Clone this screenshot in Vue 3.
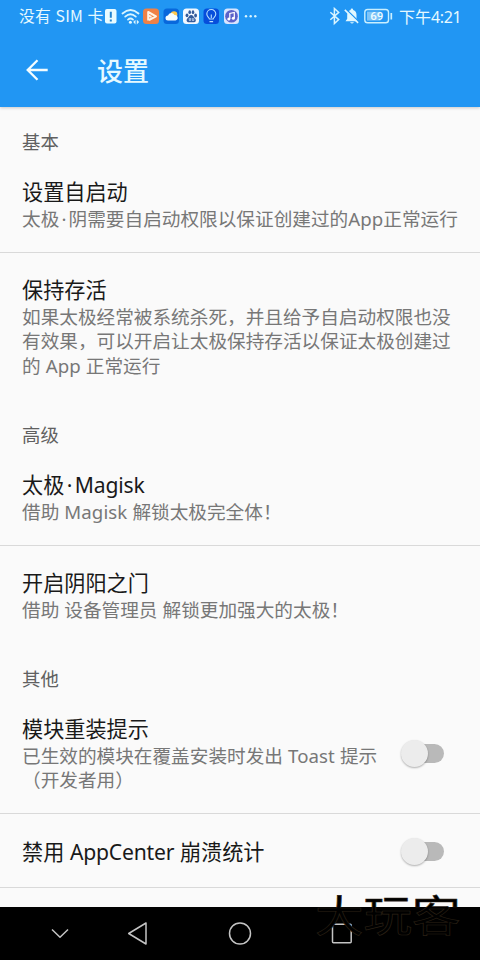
<script setup>
const sections = [
  {
    label: '基本',
    rows: [
      { title: '设置自启动', lines: ['太极·阴需要自启动权限以保证创建过的App正常运行'] },
      {
        title: '保持存活',
        lines: ['如果太极经常被系统杀死，并且给予自启动权限也没', '有效果，可以开启让太极保持存活以保证太极创建过', '的 App 正常运行'],
        last: true,
      },
    ],
  },
  {
    label: '高级',
    rows: [
      { title: '太极·Magisk', lines: ['借助 Magisk 解锁太极完全体！'] },
      { title: '开启阴阳之门', lines: ['借助 设备管理员 解锁更加强大的太极！'], last: true },
    ],
  },
  {
    label: '其他',
    rows: [
      { title: '模块重装提示', lines: ['已生效的模块在覆盖安装时发出 Toast 提示', '（开发者用）'], toggle: true },
      { title: '禁用 AppCenter 崩溃统计', lines: [], toggle: true },
    ],
  },
]

const runs = (text) =>
  text
    .split(/([A-Za-z]+|·)/)
    .filter(Boolean)
    .map((t) => ({ t, kind: t === '·' ? 'dot' : /^[A-Za-z]/.test(t) ? 'latin' : 'han' }))
</script>

<template>
  <div class="screen">
    <header class="appbar">
      <div class="status">
        <span class="carrier">没有 SIM 卡</span>
        <svg class="tray" width="154" height="20" viewBox="0 0 154 20">
          <rect x="1" y="2" width="11.5" height="14.6" rx="2" fill="#e9fbff" />
          <path d="M6.8 4.7v6M6.8 12.6v2" stroke="#2384cf" stroke-width="2" />
          <g fill="none" stroke="#d9f5ff" stroke-width="1.8" stroke-linecap="round">
            <path d="M18.5 6.5Q26.5-.4 34.500 6.500" />
            <path d="M21.200 9.600Q26.500 5 31.800 9.600" />
            <path d="M24 12.600Q26.500 10.500 29 12.600" />
          </g>
          <circle cx="26.400" cy="15.300" r="1.500" fill="#e9fbff" />
          <path d="M31.500 12.800l-2.300 2.300 2.300 2.300zM32.800 12.800l2.300 2.300-2.300 2.300z" fill="#d9f5ff" />
          <rect x="39" y="1.500" width="16" height="15.500" rx="3.500" fill="#ef8146" />
          <path d="M44.200 13.500V5l7.800 4.300-7 3.700M44.500 8.700l3 1.200" fill="none" stroke="#fff3e5" stroke-width="2" stroke-linejoin="round" />
          <rect x="59.500" y="1.500" width="15.500" height="15.500" rx="3.500" fill="#0868dc" />
          <circle cx="70" cy="7.500" r="3.300" fill="#ffc84c" />
          <path d="M64 13.500a2.500 2.500 0 010-5 3.500 3.500 0 016.500-.5 2.800 2.800 0 011 5.500z" fill="#f4fcff" />
          <rect x="79" y="1.500" width="16" height="15.500" rx="3.500" fill="#f2f8ff" />
          <g fill="#345b9b">
            <ellipse cx="83" cy="8.300" rx="1.400" ry="1.900" />
            <ellipse cx="85.700" cy="5.200" rx="1.300" ry="1.900" />
            <ellipse cx="89" cy="5.200" rx="1.300" ry="1.900" />
            <ellipse cx="91.600" cy="8.500" rx="1.400" ry="1.900" />
            <path d="M87.200 8c1.700 0 2.300 1.900 3.700 3.200 2 2.300.4 4.300-1.600 4.100h-4.200c-2.200.1-3.500-2-1.600-4.100C85 9.900 85.500 8 87.200 8z" />
          </g>
          <path d="M85.300 11v2.500h1.300V11M88.300 11v2.500h1.500V11" fill="none" stroke="#dcecff" stroke-width=".7" />
          <rect x="99.500" y="1.500" width="15.500" height="15.500" rx="3.500" fill="#064edb" />
          <path d="M105.400 12c0-1.500-2.600-2.200-2.600-5a4.500 4.500 0 019 0c0 2.800-2.600 3.500-2.600 5zM105.500 14.600h3.600M107.300 11V7.500" fill="none" stroke="#b9e2ff" stroke-width="1.100" />
          <rect x="120" y="1.500" width="15" height="15.500" rx="3.500" fill="#d9e5ff" />
          <circle cx="127.500" cy="9.200" r="6.300" fill="#5b62c9" />
          <path d="M125.800 12V6.500l4.500-1v5.800" fill="none" stroke="#fff" stroke-width="1.200" />
          <circle cx="124.800" cy="12" r="1.500" fill="#fff" /><circle cx="129.300" cy="11.300" r="1.500" fill="#fff" />
          <g fill="#d9f5ff"><circle cx="142" cy="9.300" r="1.200" /><circle cx="146.700" cy="9.300" r="1.200" /><circle cx="151.300" cy="9.300" r="1.200" /></g>
        </svg>
        <span class="spacer"></span>
        <svg class="system" width="68" height="20" viewBox="0 0 68 20">
          <path d="M2.300 5.200l8.400 7.400-4.300 3.900V1.500l4.300 3.900-8.400 7.400" fill="none" stroke="#d9f5ff" stroke-width="1.500" />
          <path d="M17.500 14.200l1.700-2.400V8q0-4 3.400-5.100a1.300 1.300 0 012.600 0Q28.500 4 28.500 8v3.800l1.700 2.400zM22 15.300h4q-2 2.600-4 0z" fill="#e1f8ff" />
          <path d="M18 2.200l13.300 13" stroke="#2196f3" stroke-width="1.600" />
          <path d="M16.800 2.900l13.300 13" stroke="#e1f8ff" stroke-width="1.500" />
          <rect x="36.800" y="2.500" width="23.700" height="13.200" rx="2.800" fill="none" stroke="#c9efff" stroke-width="1.400" />
          <rect x="39" y="4.600" width="13.500" height="9" fill="#7fc4f8" />
          <path d="M63.300 6v6.500" stroke="#c9efff" stroke-width="1.700" />
          <text x="48.700" y="13" text-anchor="middle" class="percent">69</text>
        </svg>
        <span class="clock">下午<span class="digits">4:21</span></span>
      </div>
      <div class="toolbar">
        <svg width="22" height="22" viewBox="0 0 22 22" fill="none" stroke="#f3fcff" stroke-width="2.300">
          <path d="M21.700 11H2M11.500 1.200L1.700 11l9.800 9.800" />
        </svg>
        <h1>设置</h1>
      </div>
    </header>

    <main class="content">
      <section v-for="s in sections" :key="s.label">
        <h2 class="label">{{ s.label }}</h2>
        <div v-for="r in s.rows" :key="r.title" class="row" :class="{ last: r.last, single: !r.lines.length }">
          <div class="text">
            <div class="title"><span v-for="(p, i) in runs(r.title)" :key="i" :class="p.kind">{{ p.t }}</span></div>
            <div v-for="line in r.lines" :key="line" class="summary">
              <span v-for="(p, i) in runs(line)" :key="i" :class="p.kind">{{ p.t }}</span>
            </div>
          </div>
          <div v-if="r.toggle" class="switch"><i class="thumb"></i></div>
        </div>
      </section>
    </main>

    <nav class="navbar">
      <svg width="480" height="53" viewBox="0 0 480 53" fill="none" stroke="#c4c4c4" stroke-width="1.500" stroke-linejoin="round">
        <path d="M52 22.500l8 7.700 8-7.700" />
        <path d="M146 16v21L128.700 26.500z" />
        <circle cx="240" cy="26.500" r="10.500" />
        <rect x="332.500" y="17.200" width="18.700" height="18.500" rx="1" />
      </svg>
    </nav>
    <div class="watermark">大玩客</div>
  </div>
</template>

<style>
body {
  background: #fafafa;
}
</style>

<style scoped>
.screen {
  position: relative;
  display: flex;
  flex-direction: column;
  width: 480px;
  height: 960px;
  overflow: hidden;
  background: #fafafa;
  color: #191919;
  font-family: 'Noto Sans CJK SC', sans-serif;
}
.appbar {
  flex: none;
  height: 106.5px;
  background: #2196f3;
  color: #e6f9ff;
  box-shadow: 0 1px 3px rgba(0, 0, 0, 0.2);
}
.status {
  display: flex;
  align-items: center;
  height: 33px;
  padding: 0 19px;
}
.carrier {
  width: 85px;
  margin-top: -2px;
  font-size: 15.8px;
  letter-spacing: 0.2px;
  word-spacing: 0.8px;
  white-space: nowrap;
}
.tray {
  flex: none;
}
.spacer {
  flex: 1;
}
.system {
  flex: none;
}
.percent {
  fill: #f1fcff;
  font: 500 11.5px Roboto, sans-serif;
}
.clock {
  width: 62px;
  margin-top: -2px;
  margin-left: 3px;
  font-size: 16px;
  white-space: nowrap;
}
.digits {
  font-family: 'Noto Sans', sans-serif;
  letter-spacing: -0.4px;
}
.toolbar {
  display: flex;
  align-items: center;
  gap: 49px;
  height: 73px;
  padding-left: 26px;
}
h1 {
  margin: 0;
  font-size: 26px;
  line-height: 36px;
  font-weight: 500;
}
.content {
  flex: 1;
  min-height: 0;
  overflow: hidden;
}
.label {
  box-sizing: border-box;
  height: 48px;
  margin: 0;
  padding: 22px 22px 0;
  color: #606060;
  font-size: 18.4px;
  font-weight: 400;
  line-height: 25px;
}
.row {
  box-sizing: border-box;
  display: flex;
  align-items: center;
  justify-content: space-between;
  padding: 21.5px 36px 21.25px 22px;
  border-bottom: 1px solid #d9d9d9;
}
.row.last {
  border-bottom-color: transparent;
}
.row.single {
  padding-bottom: 22px;
}
.title {
  height: 29.75px;
  font-size: 21.15px;
  line-height: 29px;
  white-space: nowrap;
}
.summary {
  height: 24.5px;
  color: #777;
  font-size: 18.65px;
  line-height: 24.5px;
  white-space: nowrap;
}
.han {
  white-space: pre;
  word-spacing: 0.045em;
}
.latin {
  font-family: 'Noto Sans', sans-serif;
  letter-spacing: -0.01em;
}
.summary .latin {
  letter-spacing: 0.005em;
}
.dot {
  display: inline-block;
  width: 0.5em;
  font-family: 'Noto Sans', sans-serif;
  text-align: center;
}
.switch {
  position: relative;
  top: 1px;
  flex: none;
  width: 40px;
  height: 19px;
  border-radius: 10px;
  background: #b9b9b9;
}
.thumb {
  position: absolute;
  left: -3px;
  top: -4px;
  width: 27px;
  height: 27px;
  border-radius: 50%;
  background: #ececec;
  box-shadow: 0 1px 2px rgba(0, 0, 0, 0.3);
}
.navbar {
  flex: none;
  height: 53px;
  background: #000;
}
.watermark {
  position: absolute;
  left: 315px;
  top: 880px;
  color: #000;
  font-size: 48.5px;
  line-height: 68px;
  white-space: nowrap;
  transform: scaleY(0.88);
  transform-origin: 50% 50%;
  -webkit-text-stroke: 0.7px #2b2115;
}
</style>
